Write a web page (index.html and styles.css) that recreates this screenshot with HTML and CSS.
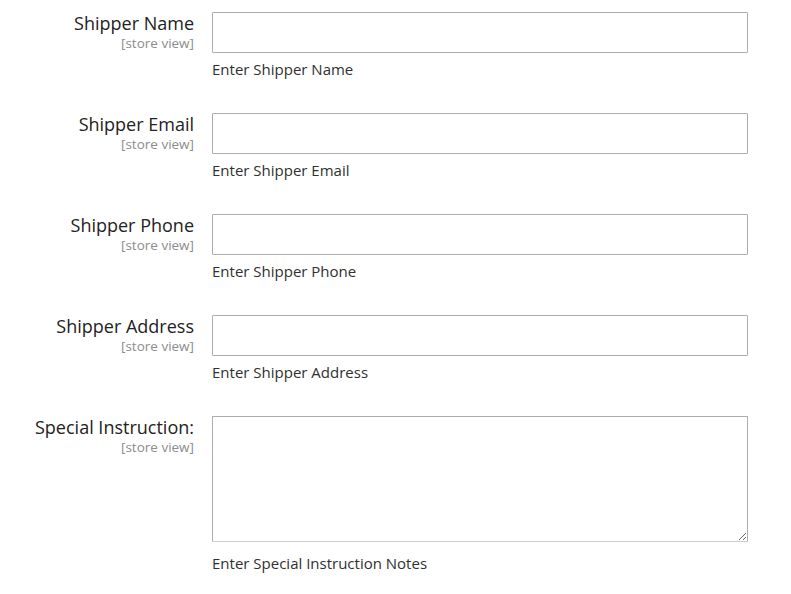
FILE: index.html
```html
<!DOCTYPE html>
<html lang="en">
<head>
    <meta charset="UTF-8">
    <meta name="viewport" content="width=device-width, initial-scale=1.0">
    <title>Shipper Settings</title>
    <link rel="stylesheet" href="styles.css">
</head>
<body>
    <div class="form">
        <div class="field">
            <div class="label">
                <span class="label-text">Shipper Name</span>
                <span class="scope">[store view]</span>
            </div>
            <div class="control">
                <input type="text" class="input">
                <div class="note">Enter Shipper Name</div>
            </div>
        </div>

        <div class="field">
            <div class="label">
                <span class="label-text">Shipper Email</span>
                <span class="scope">[store view]</span>
            </div>
            <div class="control">
                <input type="text" class="input">
                <div class="note">Enter Shipper Email</div>
            </div>
        </div>

        <div class="field">
            <div class="label">
                <span class="label-text">Shipper Phone</span>
                <span class="scope">[store view]</span>
            </div>
            <div class="control">
                <input type="text" class="input">
                <div class="note">Enter Shipper Phone</div>
            </div>
        </div>

        <div class="field">
            <div class="label">
                <span class="label-text">Shipper Address</span>
                <span class="scope">[store view]</span>
            </div>
            <div class="control">
                <input type="text" class="input">
                <div class="note">Enter Shipper Address</div>
            </div>
        </div>

        <div class="field">
            <div class="label">
                <span class="label-text">Special Instruction:</span>
                <span class="scope">[store view]</span>
            </div>
            <div class="control">
                <textarea class="textarea"></textarea>
                <div class="note note-wide">Enter Special Instruction Notes</div>
            </div>
        </div>
    </div>
</body>
</html>
```

FILE: styles.css
```css
body {
    margin: 0;
    background-color: #fff;
    font-family: "Open Sans", Arial, sans-serif;
    color: #303030;
}
.form {
    padding-top: 12px;
}
.field {
    display: grid;
    grid-template-columns: 194px 536px;
    column-gap: 18px;
    margin-bottom: 34px;
}
.label {
    display: flex;
    flex-direction: column;
    align-items: flex-end;
    text-align: right;
}
.label-text {
    font-size: 18px;
    font-weight: 400;
    line-height: 22px;
    color: #222;
}
.scope {
    font-size: 13.5px;
    line-height: 18px;
    color: #8c8c8c;
}
.control {
    display: flex;
    flex-direction: column;
}
.input {
    box-sizing: border-box;
    width: 536px;
    height: 41px;
    margin: 0;
    border: 1px solid #adadad;
    border-radius: 1px;
    font-family: inherit;
    font-size: 14px;
}
.textarea {
    box-sizing: border-box;
    width: 536px;
    height: 126px;
    margin: 0;
    border: 1px solid #adadad;
    border-bottom-color: #cccccc;
    border-radius: 1px;
    font-family: inherit;
    font-size: 14px;
    resize: vertical;
}
.note {
    margin-top: 6px;
    font-size: 15px;
    line-height: 20px;
    color: #303030;
}
.note-wide {
    margin-top: 11px;
}
```
